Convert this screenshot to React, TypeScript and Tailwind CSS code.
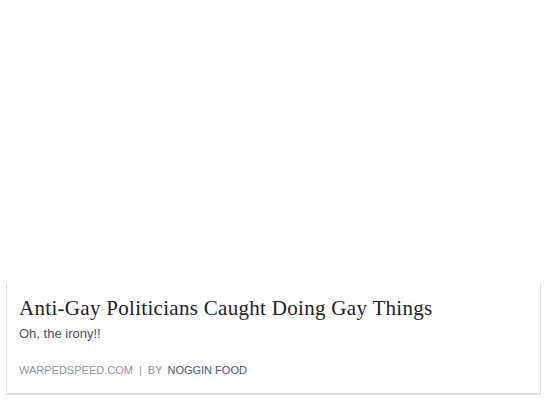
export default function App() {
  return (
    <div className="w-[547px] h-[400px] bg-white overflow-hidden">
      <div className="h-[283px]" />
      <div className="mx-[6px] w-[535px] border-x border-b-2 border-[#dddfe2] bg-white px-[12px] pt-[12px] pb-[17px]">
        <div
          className="text-[21px] leading-[26px] tracking-[0.3px] text-[#1d2129]"
          style={{ fontFamily: '"Liberation Serif", Georgia, serif' }}
        >
          Anti-Gay Politicians Caught Doing Gay Things
        </div>
        <div
          className="mt-[5px] text-[13px] leading-[16px] text-[#4b4f56]"
          style={{ fontFamily: '"Liberation Sans", Arial, sans-serif' }}
        >
          Oh, the irony!!
        </div>
        <div
          className="mt-[22px] text-[11px] leading-[12px] uppercase text-[#90949c]"
          style={{ fontFamily: '"Liberation Sans", Arial, sans-serif' }}
        >
          <span>warpedspeed.com</span>
          <span className="mx-[6px]">|</span>
          <span>by</span>
          <span className="ml-[5px] text-[#365899]">Noggin Food</span>
        </div>
      </div>
    </div>
  );
}
